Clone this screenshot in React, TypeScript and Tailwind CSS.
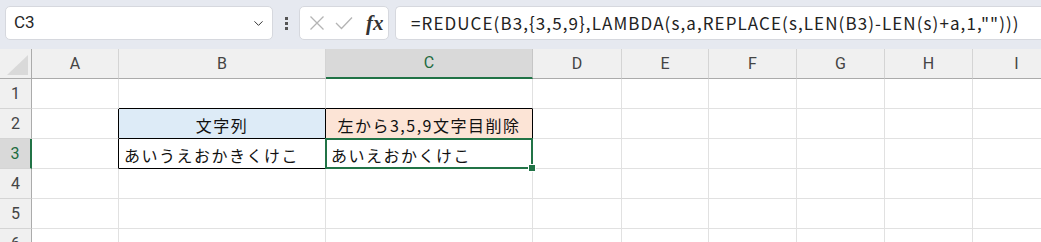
import { ChevronDown } from "lucide-react";

type Col = { name: string; w: string };

const cols: Col[] = [
  { name: "A", w: "w-[87px]" },
  { name: "B", w: "w-[207px]" },
  { name: "C", w: "w-[207px]" },
  { name: "D", w: "w-[89px]" },
  { name: "E", w: "w-[87px]" },
  { name: "F", w: "w-[88px]" },
  { name: "G", w: "w-[88px]" },
  { name: "H", w: "w-[88px]" },
  { name: "I", w: "w-[88px]" },
];

const rows = [1, 2, 3, 4, 5, 6];

const jp = { fontFamily: '"Noto Sans CJK JP", "Noto Sans", sans-serif' };

const cellClass = (r: number, c: string) => {
  let cls = "border-r border-b border-[#e1e1e1]";
  if ((r === 2 || r === 3) && (c === "A" || c === "B" || c === "C")) cls = "border-r border-b border-r-black border-b-[#e1e1e1]";
  if ((r === 2 || r === 3) && (c === "B" || c === "C")) cls = "border-r border-b border-black";
  if (r === 1 && (c === "B" || c === "C")) cls = "border-r border-b border-r-[#e1e1e1] border-b-black";
  if (r === 2 && c === "B") cls += " bg-[#ddebf7]";
  if (r === 2 && c === "C") cls += " bg-[#fce4d6]";
  return cls;
};

const cellText = (r: number, c: string) => {
  if (r === 2 && c === "B") return "文字列";
  if (r === 2 && c === "C") return "左から3,5,9文字目削除";
  if (r === 3 && c === "B") return "あいうえおかきくけこ";
  if (r === 3 && c === "C") return "あいえおかくけこ";
  return "";
};

export default function App() {
  return (
    <div className="w-[1041px] h-[242px] overflow-hidden bg-white">
      {/* toolbar */}
      <div className="h-[49px] bg-[#e6e9f0] flex items-start pt-[6px] pl-[5px] gap-0">
        <div className="w-[268px] h-[34px] bg-white rounded-[5px] border border-[#d6d8de] flex items-center pl-[8px] pr-[6px]">
          <span className="text-[17px] text-[#262626] flex-1" style={{ fontFamily: "Roboto, sans-serif" }}>C3</span>
          <ChevronDown size={15} strokeWidth={1.6} className="text-[#333]" />
        </div>
        <div className="w-[26px] h-[34px] flex flex-col items-center justify-center gap-[2px]">
          <span className="w-[3px] h-[3px] bg-[#555]" />
          <span className="w-[3px] h-[3px] bg-[#555]" />
          <span className="w-[3px] h-[3px] bg-[#555]" />
        </div>
        <div className="w-[90px] h-[34px] bg-white rounded-[5px] border border-[#d6d8de] flex items-center pl-[7px] gap-[10px]">
          <svg width="16" height="16" viewBox="0 0 16 16" className="ml-[2px]">
            <path d="M1.5 1.5 L14.5 14.5 M14.5 1.5 L1.5 14.5" stroke="#b4b4b4" strokeWidth="1.3" fill="none" />
          </svg>
          <svg width="18" height="14" viewBox="0 0 18 14">
            <path d="M1 7 L6.5 12.5 L17 1.5" stroke="#b4b4b4" strokeWidth="1.3" fill="none" />
          </svg>
          <span className="text-[21px] italic font-semibold text-[#333] leading-none ml-[3px]" style={{ fontFamily: '"Liberation Serif", serif' }}>fx</span>
        </div>
        <div className="ml-[6px] flex-1 h-[34px] bg-white rounded-l-[5px] border border-r-0 border-[#d6d8de] flex items-center pl-[15px]">
          <span className="text-[17px] text-[#222] tracking-[1.08px] whitespace-nowrap" style={{ fontFamily: '"Noto Sans CJK JP", sans-serif' }}>
            =REDUCE(B3,{"{"}3,5,9{"}"},LAMBDA(s,a,REPLACE(s,LEN(B3)-LEN(s)+a,1,"")))
          </span>
        </div>
      </div>

      {/* column headers */}
      <div className="flex h-[30px] bg-[#f0f0f0]" style={{ fontFamily: "Roboto, sans-serif" }}>
        <div className="w-[32px] shrink-0 border-r border-b border-[#ababab] flex items-end justify-end pr-[3px] pb-[3px]">
          <svg width="21" height="20" viewBox="0 0 21 20">
            <path d="M21 0 L21 20 L0 20 Z" fill="#d9d9d9" />
          </svg>
        </div>
        {cols.map((c) => (
          <div
            key={c.name}
            className={`${c.w} shrink-0 flex items-center justify-center text-[16px] ${
              c.name === "C"
                ? "bg-[#d9d9d9] border-r border-r-[#c6c6c6] border-b-2 border-b-[#217346] text-[#1e6b40]"
                : "border-r border-r-[#d4d4d4] border-b border-b-[#ababab] text-[#444]"
            }`}
          >
            {c.name}
          </div>
        ))}
      </div>

      {/* rows */}
      {rows.map((r) => (
        <div key={r} className="flex h-[30px]">
          <div
            className={`w-[32px] shrink-0 flex items-center justify-center text-[16px] border-b border-b-[#d4d4d4] ${
              r === 3 ? "bg-[#d9d9d9] border-r-2 border-r-[#217346] text-[#1e6b40]" : "bg-[#f0f0f0] border-r border-r-[#ababab] text-[#444]"
            }`}
            style={{ fontFamily: "Roboto, sans-serif" }}
          >
            {r}
          </div>
          {cols.map((c) => {
            const t = cellText(r, c.name);
            const centered = r === 2;
            return (
              <div
                key={c.name}
                className={`${c.w} shrink-0 relative flex items-center pt-[2px] text-[16px] text-[#111] tracking-[1.5px] whitespace-nowrap ${
                  centered ? "justify-center" : "pl-[5px]"
                } ${cellClass(r, c.name)}`}
                style={jp}
              >
                {t}
                {r === 3 && c.name === "C" && (
                  <div className="absolute z-10 -left-[1px] -top-[1px] -right-[1px] -bottom-[1px] border-2 border-[#217346]">
                    <div className="absolute -right-[5px] -bottom-[5px] w-[8px] h-[8px] bg-[#217346] border border-white" />
                  </div>
                )}
              </div>
            );
          })}
        </div>
      ))}
    </div>
  );
}
